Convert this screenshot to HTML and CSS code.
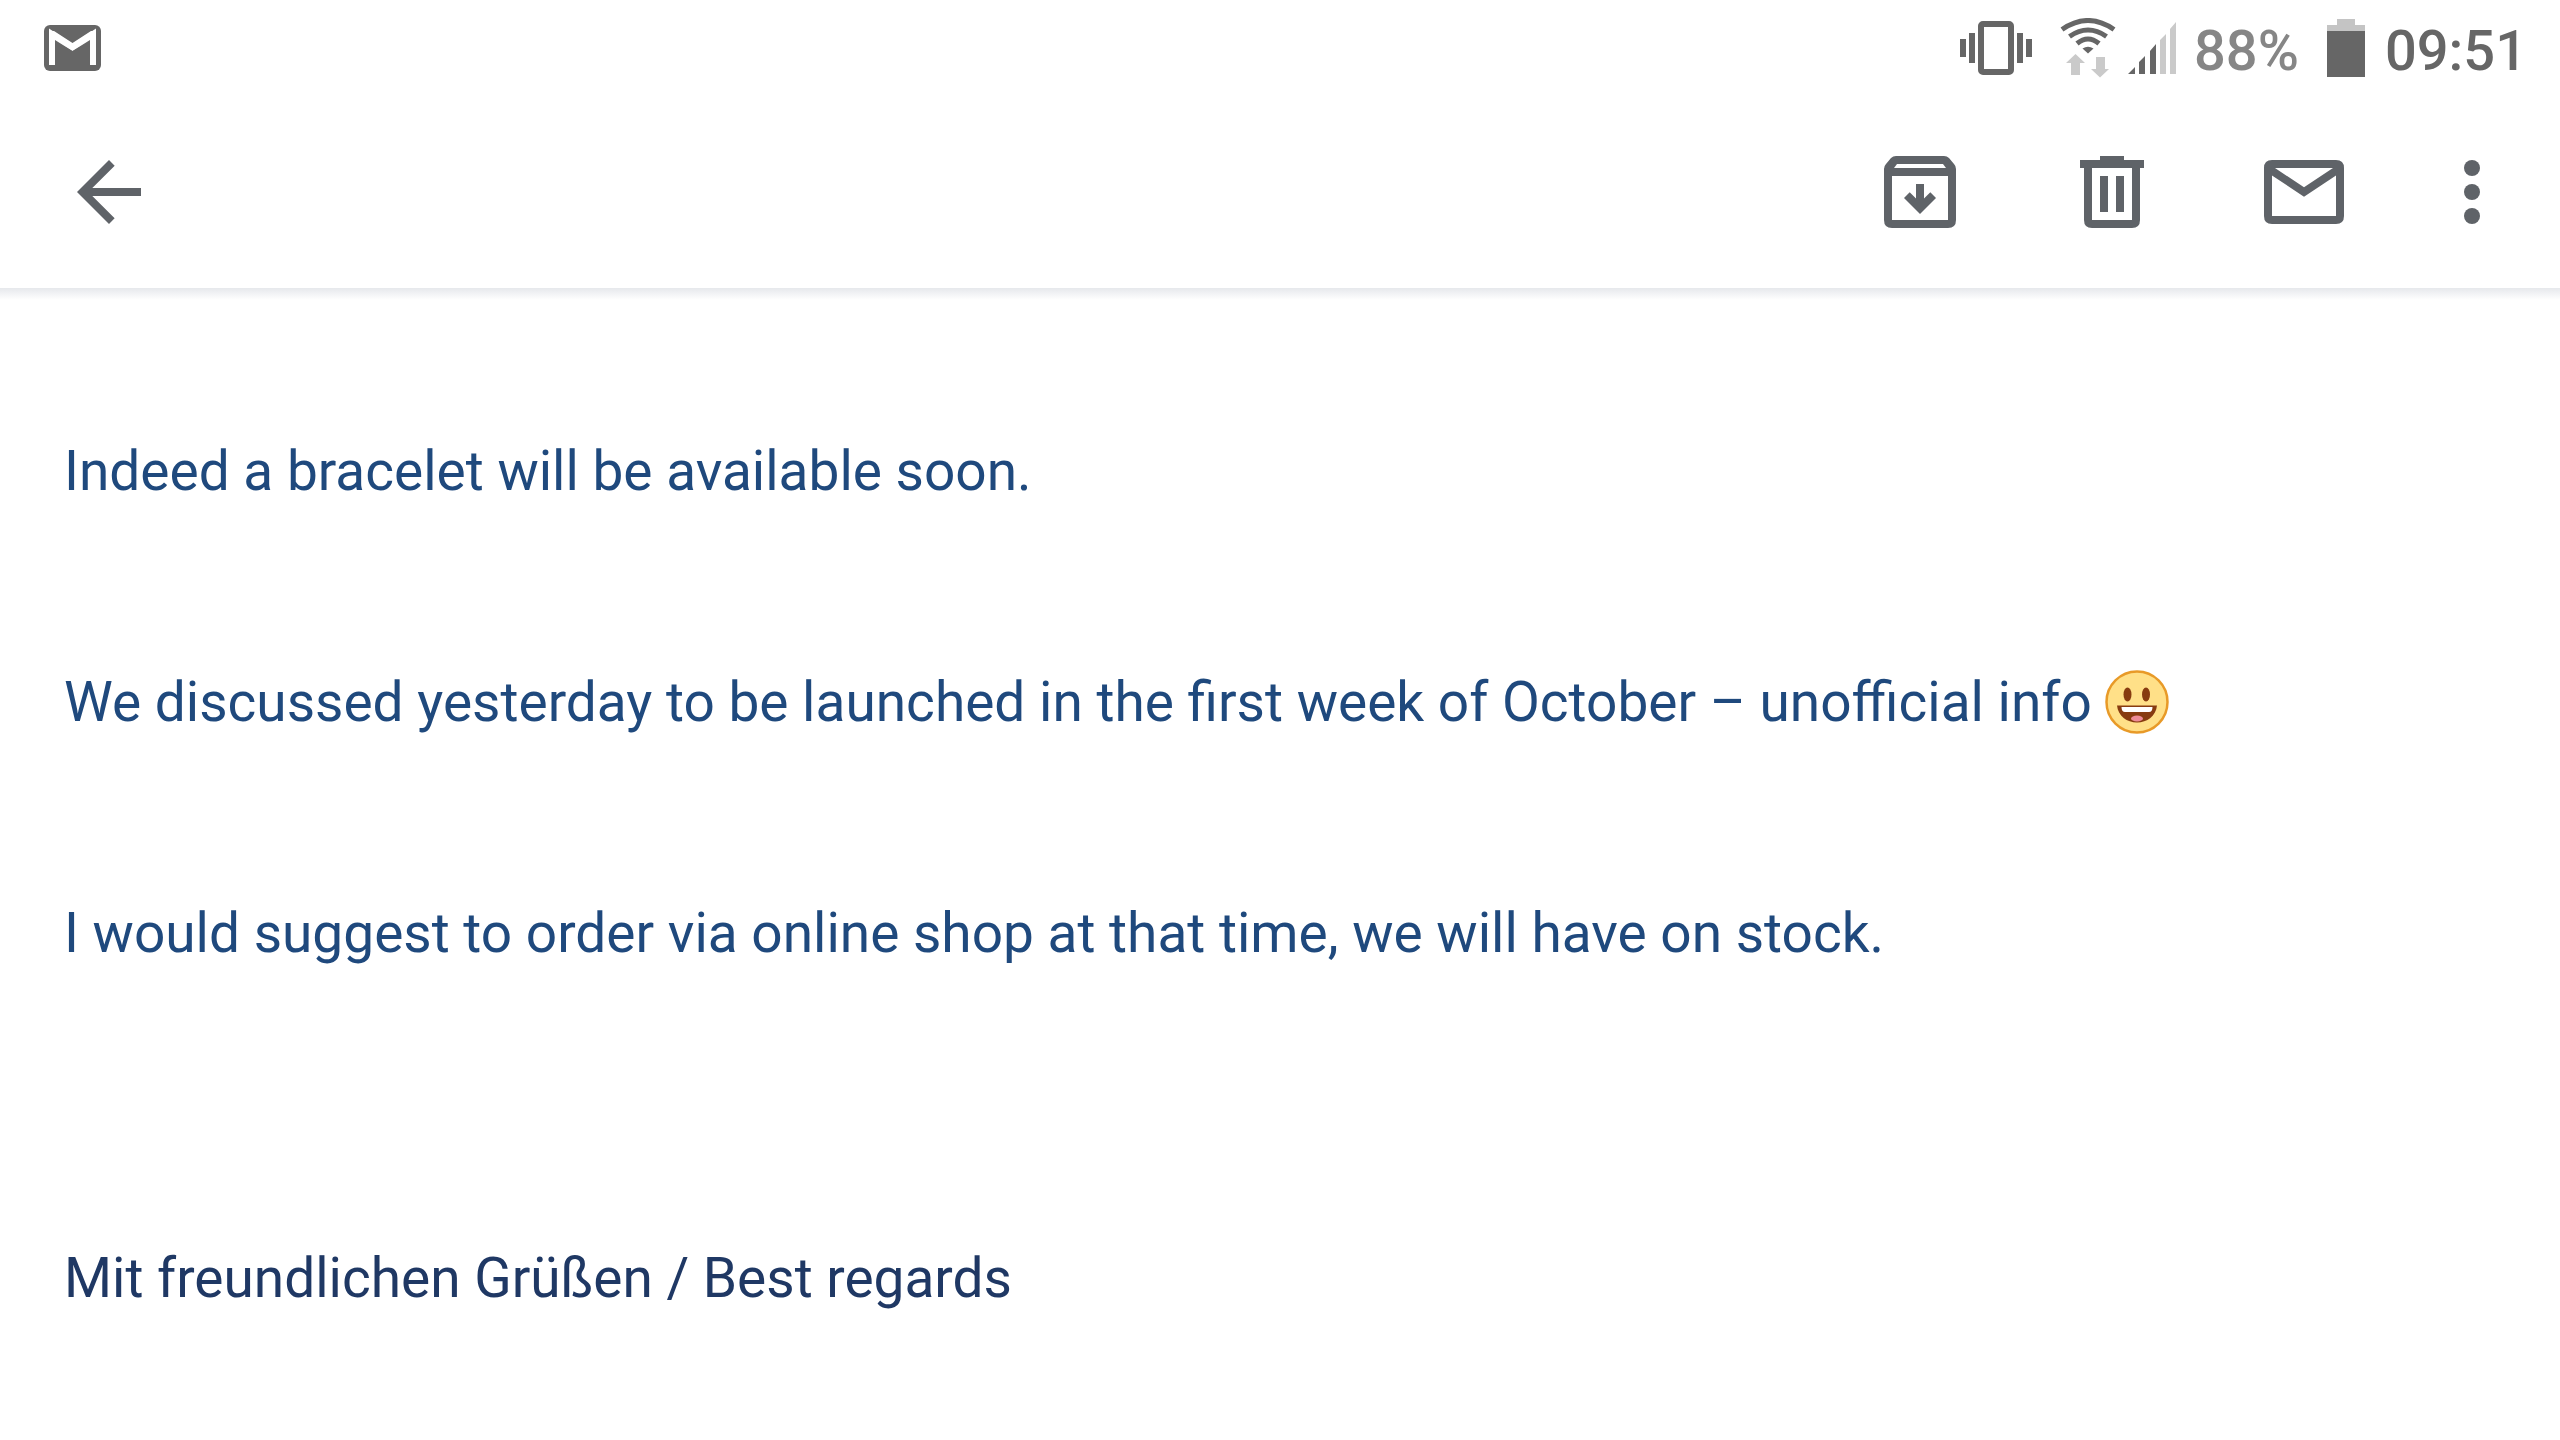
FILE: index.html
```html
<!DOCTYPE html>
<html lang="en">
<head>
    <meta charset="utf-8">
    <title>Mail</title>
    <link rel="stylesheet" href="styles.css">
</head>
<body>
    <div class="status-bar">
        <svg class="status-icon" width="58" height="66" viewBox="0 0 58 66" aria-label="New mail">
            <rect x="0" y="7" width="57" height="46" rx="6" fill="#666"/>
            <path d="M8 47V16L28.500 29.500L49 16V47" fill="none" stroke="#fff" stroke-width="6"/>
            <path d="M5 13H10L28.500 25L47 13H52V20L28.500 33L5 20Z" fill="#fff"/>
            <path d="M11 22L28.500 33L46 22V48H11Z" fill="#666"/>
        </svg>

        <div class="status-right">
            <svg class="status-icon vibrate" width="72" height="66" viewBox="0 0 72 66" aria-label="Vibrate">
                <rect x="21" y="6" width="30" height="48" rx="2" fill="none" stroke="#666" stroke-width="6"/>
                <path d="M0 21h6v18H0zM9 15h6v30H9zM57 15h6v30h-6zM66 21h6v18h-6z" fill="#666"/>
            </svg>
            <svg class="status-icon wifi" width="56" height="66" viewBox="0 0 56 66" aria-label="Wi-Fi">
                <g fill="none" stroke="#666" stroke-width="5">
                    <path d="M2 11.500Q28 -6.500 54 11.500"/>
                    <path d="M9.500 18.500Q28 5.500 46.500 18.500"/>
                    <path d="M17 25.500Q28 16.500 39 25.500"/>
                </g>
                <path d="M22.500 30.500Q28 27 33.500 30.500L28 35.500Z" fill="#666"/>
                <path d="M15.500 36L25 45H20V57H11V45H6ZM36 39H45V51H49L40 59.500L31 51H36Z" fill="#cacaca"/>
            </svg>
            <svg class="status-icon signal" width="48" height="66" viewBox="0 0 48 66" aria-label="Mobile signal">
                <path d="M0 56L7 49V56ZM11 44L17 38V56H11ZM22 33L28 26V56H22Z" fill="#666"/>
                <path d="M32 22L38 16V56H32ZM42 11L48 4V56H42Z" fill="#cacaca"/>
            </svg>
            <span class="battery-level">88%</span>
            <svg class="status-icon battery" width="38" height="66" viewBox="0 0 38 66" aria-label="Battery">
                <path d="M10 1h18v6h10v6H0V7h10z" fill="#c4c4c4"/>
                <path d="M0 13h38v46H0z" fill="#666"/>
            </svg>
            <span class="clock">09:51</span>
        </div>
    </div>

    <header class="toolbar">
        <button class="tool-button back" aria-label="Back">
            <svg width="96" height="96" viewBox="0 0 24 24">
                <path d="M20 11H7.830l5.590-5.590L12 4l-8 8 8 8 1.410-1.410L7.830 13H20v-2z"/>
            </svg>
        </button>
        <div class="actions">
            <button class="tool-button" aria-label="Archive">
                <svg width="96" height="96" viewBox="0 0 96 96">
                    <path fill-rule="evenodd" d="M24 12H72Q75 12 77 14L82 20Q84 22 84 25V76Q84 84 76 84H20Q12 84 12 76V25Q12 22 14 20L19 14Q21 12 24 12ZM25 20L22 24H74L71 20ZM20 32V76H76V32Z"/>
                    <path d="M44 40H52V54.500L58.300 48.300L64 54L48 70L32 54L37.700 48.300L44 54.500Z"/>
                </svg>
            </button>
            <button class="tool-button" aria-label="Delete">
                <svg width="96" height="96" viewBox="0 0 96 96">
                    <path fill-rule="evenodd" d="M36 12H60V16H80V24H76V76Q76 84 68 84H28Q20 84 20 76V24H16V16H36ZM28 24V76H68V24Z"/>
                    <path d="M36 32h8v36h-8zM52 32h8v36h-8z"/>
                </svg>
            </button>
            <button class="tool-button" aria-label="Mark as unread">
                <svg width="96" height="96" viewBox="0 0 96 96">
                    <path fill-rule="evenodd" d="M16 16H80Q88 16 88 24V72Q88 80 80 80H16Q8 80 8 72V24Q8 16 16 16ZM19 24L48 43.300L77 24ZM16 31.500V72H80V31.500L48 52.700Z"/>
                </svg>
            </button>
            <button class="tool-button more" aria-label="More options">
                <svg width="96" height="96" viewBox="0 0 96 96">
                    <circle cx="48" cy="24" r="8"/>
                    <circle cx="48" cy="48" r="8"/>
                    <circle cx="48" cy="72" r="8"/>
                </svg>
            </button>
        </div>
    </header>

    <main class="message">
        <p>Indeed a bracelet will be available soon.</p>
        <p>We discussed yesterday to be launched in the first week of October – unofficial info <svg class="emoji" width="64" height="64" viewBox="0 0 64 64" role="img" aria-label="Grinning face">
            <circle cx="32" cy="32" r="30.500" fill="#ffe088" stroke="#e89a28" stroke-width="2.500"/>
            <ellipse cx="22.500" cy="24.500" rx="4" ry="7" fill="#873b10"/>
            <ellipse cx="41" cy="24.500" rx="4" ry="7" fill="#873b10"/>
            <path d="M12 35.500H52C51 46 42 52.500 32 52.500S13 46 12 35.500Z" fill="#873b10"/>
            <path d="M16.500 37H47.500Q47.500 42 44 42H20Q16.500 42 16.500 37Z" fill="#fff"/>
            <ellipse cx="32" cy="48.500" rx="6" ry="3" fill="#ee8c98"/>
        </svg></p>
        <p>I would suggest to order via online shop at that time, we will have on stock.</p>
        <p class="signature">Mit freundlichen Grüßen / Best regards</p>
    </main>
</body>
</html>
```
FILE: styles.css
```css
* {
    box-sizing: border-box;
}
body {
    margin: 0;
    background: #fff;
    font-family: Roboto, sans-serif;
    font-size: 55px;
    line-height: 66px;
}
svg {
    display: block;
}
.status-bar {
    display: flex;
    justify-content: space-between;
    padding: 18px 33px 12px 44px;
    font-size: 56px;
    font-weight: 500;
    color: #666;
}
.status-right {
    display: flex;
}
.wifi {
    margin-left: 28px;
}
.signal {
    margin-left: 12px;
}
.battery-level {
    margin-left: 18px;
    color: #868686;
}
.battery {
    margin-left: 28px;
    margin-right: 20px;
}
.toolbar {
    display: flex;
    justify-content: space-between;
    padding: 0 16px 0 13px;
}
.actions {
    display: flex;
}
.tool-button {
    display: flex;
    align-items: center;
    justify-content: center;
    width: 192px;
    height: 192px;
    padding: 0;
    border: none;
    background: none;
    cursor: pointer;
}
.tool-button svg {
    fill: #5f6368;
}
.tool-button.more {
    width: 144px;
}
.message {
    padding: 150px 64px 64px;
    background: linear-gradient(#e6e8ec, #fff) no-repeat top / 100% 12px;
    color: #1f497d;
}
.message p {
    margin: 0 0 165px;
}
.message .emoji {
    display: inline-block;
    margin: -8px 0;
    vertical-align: -5px;
}
.message .signature {
    margin: 279px 0 0;
    color: #1f3864;
}
```
